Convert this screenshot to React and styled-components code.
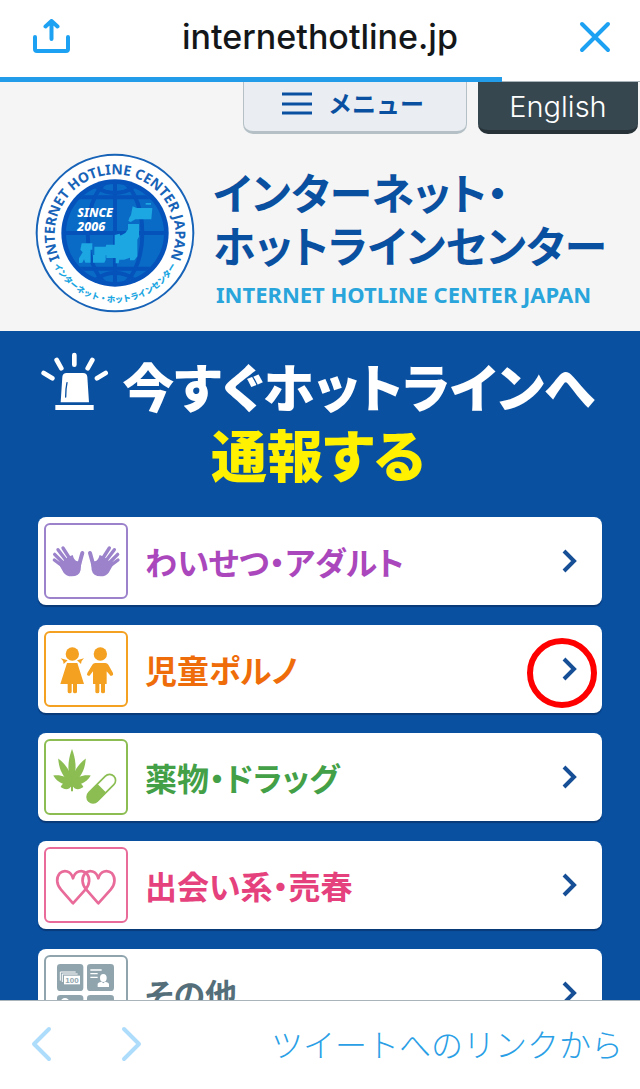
import React from 'react';
import styled, { createGlobalStyle } from 'styled-components';

const JP = '"Noto Sans CJK JP", "Noto Sans", sans-serif';
const UI = 'Inter, "Noto Sans CJK JP", sans-serif';

const GlobalStyle = createGlobalStyle`
  * { box-sizing: border-box; }
  body { margin: 0; background: white; font-family: ${JP}; }
  h1, h2, ul { margin: 0; padding: 0; }
  button { border: 0; padding: 0; background: none; font: inherit; cursor: pointer; }
  svg { display: block; }
`;

const Screen = styled.div`
  display: flex;
  flex-direction: column;
  height: 100vh;
  overflow: hidden;
`;

const BrowserBar = styled.header`
  display: grid;
  grid-template-columns: 1fr auto 1fr;
  align-items: center;
  height: 77px;
  padding: 0 28px 4px 32px;
  flex: none;
`;

const Address = styled.div`
  padding-right: 4px;
  font-family: ${UI};
  font-size: 34px;
  font-weight: 500;
  color: #14171a;
`;

const IconButton = styled.button`
  justify-self: ${props => props.$side};
  color: #1da1f2;
`;

const Progress = styled.div`
  flex: none;
  height: 5px;
  border-bottom: 1px solid #a9b4ba;
  div {
    height: 5px;
    background: #229ce9;
  }
`;

const WebView = styled.main`
  flex: 1;
  min-height: 0;
  overflow: hidden;
  background: #0a50a1;
`;

const SiteHeader = styled.div`
  background: #f5f5f5;
  padding-bottom: 18px;
`;

const Tabs = styled.nav`
  display: flex;
  justify-content: flex-end;
  gap: 11px;
  padding-right: 2px;
`;

const MenuTab = styled.button`
  display: flex;
  align-items: flex-start;
  justify-content: center;
  gap: 16px;
  width: 224px;
  height: 52px;
  padding: 4px 4px 0 0;
  border: 1px solid #b4c0c6;
  border-width: 0 1px 3px;
  border-radius: 0 0 10px 10px;
  background: #eaeef2;
  color: #0a50a1;
  font-size: 24px;
  line-height: 34px;
  font-weight: 700;
  svg { margin-top: 6px; }
`;

const LanguageTab = styled.a`
  width: 160px;
  height: 52px;
  border-bottom: 4px solid #263238;
  border-radius: 0 0 10px 10px;
  background: #37474f;
  color: white;
  font-family: ${UI};
  font-size: 29px;
  font-weight: 300;
  line-height: 50px;
  text-align: center;
  text-decoration: none;
`;

const Brand = styled.div`
  display: flex;
  gap: 18px;
  padding: 19px 30px 0 35px;
  svg { flex: none; }
`;

const SiteName = styled.h1`
  padding-top: 12px;
  color: #0a50a1;
  font-size: 43px;
  line-height: 53px;
  font-weight: 700;
  font-feature-settings: "palt";
  white-space: nowrap;
  small {
    display: block;
    padding: 4px 0 0 3px;
    color: #29a5dc;
    font-family: "Noto Sans", sans-serif;
    font-size: 22px;
    line-height: 38px;
  }
`;

const Headline = styled.h2`
  display: flex;
  justify-content: center;
  flex-wrap: wrap;
  column-gap: 13px;
  padding: 21px 42px 31px 38px;
  color: white;
  font-size: 52px;
  line-height: 67px;
  font-weight: 900;
  font-feature-settings: "palt";
  white-space: nowrap;
  em {
    flex-basis: 100%;
    text-align: center;
    color: #fff100;
    font-size: 56px;
    font-style: normal;
  }
`;

const Categories = styled.ul`
  display: flex;
  flex-direction: column;
  gap: 20px;
  padding: 0 38px;
  list-style: none;
`;

const CategoryItem = styled.li`
  position: relative;
`;

const CategoryLink = styled.a`
  display: flex;
  align-items: center;
  height: 88px;
  padding: 0 24px 0 6px;
  border-radius: 8px;
  background: white;
  box-shadow: 0 2px 1px #083a78;
  color: ${props => props.$color};
  font-size: 32px;
  font-weight: 700;
  font-feature-settings: "palt";
  text-decoration: none;
`;

const Thumb = styled.span`
  width: 84px;
  height: 76px;
  margin-right: 17px;
  border: 2px solid ${props => props.$color};
  border-radius: 6px;
  color: ${props => props.$color};
`;

const Label = styled.span`
  flex: 1;
`;

const Marker = styled.span`
  position: absolute;
  top: 13px;
  right: 5px;
  width: 70px;
  height: 70px;
  border: 6px solid #ff0000;
  border-radius: 50%;
  pointer-events: none;
`;

const BottomBar = styled.footer`
  display: flex;
  align-items: center;
  flex: none;
  height: 89px;
  padding: 0 17px 2px 30px;
  border-top: 1px solid #a9b4ba;
  gap: 66px;
`;

const NavButton = styled.button`
  color: #aedcfb;
`;

const SourceLink = styled.a`
  margin-left: auto;
  color: #2b9fe6;
  font-size: 32px;
  line-height: 40px;
  padding-bottom: 2px;
  font-weight: 300;
  text-decoration: none;
`;

const ShareIcon = () => (
  <svg width="39" height="36" viewBox="0 0 39 36" fill="none" stroke="currentColor" strokeWidth="4" strokeLinecap="round" strokeLinejoin="round">
    <path d="M3 18v12q0 2 2 2h29q2 0 2-2V18M19.500 20V2.500M13.500 7.500l6-5.500 6 5.500" />
  </svg>
);

const CloseIcon = () => (
  <svg width="34" height="34" viewBox="0 0 34 34" fill="none" stroke="currentColor" strokeWidth="4" strokeLinecap="round">
    <path d="M4 4l26 26M30 4L4 30" />
  </svg>
);

const MenuIcon = () => (
  <svg width="30" height="24" viewBox="0 0 30 24" stroke="currentColor" strokeWidth="3">
    <path d="M0 2h30M0 12h30M0 21h30" />
  </svg>
);

const Chevron = () => (
  <svg width="16" height="24" viewBox="0 0 16 24" fill="none" stroke="#174f96" strokeWidth="4">
    <path d="M2 2l10 10-10 10" />
  </svg>
);

const NavChevron = ({ forward }) => (
  <svg width="24" height="36" viewBox="0 0 24 36" fill="none" stroke="currentColor" strokeWidth="4" strokeLinecap="round" strokeLinejoin="round">
    <path d={forward ? 'M4 3l15 15L4 33' : 'M19 3L4 18l15 15'} />
  </svg>
);

const Seal = () => (
  <svg width="160" height="160" viewBox="30 24 480 480">
    <defs>
      <path id="arcTop" d="M103 339A181 181 0 1 1 437 339" />
      <path id="arcBottom" d="M83 355A208 208 0 0 0 457 355" />
      <clipPath id="globe"><circle cx="270" cy="264" r="147" /></clipPath>
    </defs>
    <circle cx="270" cy="264" r="235" fill="white" stroke="#1763b8" strokeWidth="6" />
    <circle cx="270" cy="264" r="161" fill="#0552bb" />
    <circle cx="270" cy="264" r="147" fill="#0a6bc6" />
    <g clipPath="url(#globe)" fill="none" stroke="#0552bb" strokeWidth="12">
      <path d="M110 264h320M270 100v330M120 157h300M120 371h300" />
      <ellipse cx="270" cy="264" rx="82" ry="160" />
      <ellipse cx="270" cy="90" rx="74" ry="54" />
      <ellipse cx="270" cy="438" rx="74" ry="54" />
    </g>
    <g fill="#1ca6e2">
      <path d="M323 184l12 5h47l-3 34h-48l-14 8-7-3 3-10 5-8zM362 174h16v5h-16z" />
      <path d="M309 237h33v38l-5 9v50l-9 12h-13v-8l-18 6h-14l-2 11h-9v-16h-28v-8h-36v-26h34l2-6h25v-29l15-4 2 6 15-8 8-11z" />
      <path d="M204 330h38v15l-4 8h-34zM170 295h32v19h-5v39h-16l-4-10-5 10-10 1v-14l11-18-7-8z" />
    </g>
    <g fill="white" fontFamily="'Noto Sans'" fontWeight="800" fontStyle="italic" fontSize="37">
      <text x="157" y="216">SINCE</text>
      <text x="157" y="258">2006</text>
    </g>
    <text fill="#1763b8" fontFamily="'Noto Sans'" fontWeight="700" fontSize="42" textAnchor="middle">
      <textPath href="#arcTop" startOffset="50%">INTERNET HOTLINE CENTER JAPAN</textPath>
    </text>
    <text fill="#1ca6e2" fontFamily="'Noto Sans CJK JP'" fontWeight="900" fontSize="25" textAnchor="middle">
      <textPath href="#arcBottom" startOffset="50%">インターネット・ホットラインセンター</textPath>
    </text>
  </svg>
);

const SirenIcon = () => (
  <svg width="68" height="59" viewBox="62 39 204 177" fill="white">
    <path d="M121 190l5-76q1-12 13-12h49q12 0 13 12l5 76zM105 198h115v15H105z" />
    <path d="M140 131q-4 18-4 43" fill="none" stroke="#0a50a1" strokeWidth="4" strokeLinecap="round" />
    <g stroke="white" strokeWidth="14" strokeLinecap="round">
      <path d="M162 48v29M109 63l14 25M216 63l-14 25M70 102l26 16M256 102l-26 16" />
    </g>
  </svg>
);

const Hand = () => (
  <g stroke="currentColor" strokeLinecap="round" strokeWidth="10">
    <path d="M104 188l-31-23M106 180l-32-32M114 173L84 134M124 168l-25-39" />
    <path d="M146 184l11-40" strokeWidth="12" />
    <path d="M90 184l10-16 14-12 14-6q5 18 14 19l12 0-2 26q-4 19-27 19-16 0-24-11z" stroke="none" />
  </g>
);

const HandsIcon = () => (
  <svg width="80" height="72" viewBox="48 60 240 216" fill="currentColor">
    <Hand />
    <g transform="translate(337 0) scale(-1 1)"><Hand /></g>
  </svg>
);

const ChildrenIcon = () => (
  <svg width="80" height="72" viewBox="48 384 240 216" fill="currentColor">
    <circle cx="127" cy="447" r="20" />
    <path d="M113 466l-21-6q9 7 9 17zM141 466l21-6q-9 7-9 17z" />
    <path d="M111 474h31l20 63h-21v23q0 5-6 5t-6-5v-23h-4v23q0 5-6 5t-6-5v-23H91z" />
    <circle cx="211" cy="447" r="20" />
    <path d="M196 474h30q6 0 9 5l14 25q2 6-3 8t-7-3l-9-10v38h-5v23q0 5-6 5t-6-5v-23h-5v23q0 5-6 5t-6-5v-23h-7v-38l-8 10q-3 5-7 3-5-2-2-8l15-25q3-5 9-5z" />
  </svg>
);

// rotation and length of each leaflet
const leaflets = [[0, 106], [-28, 88], [28, 88], [-65, 62], [65, 62], [-103, 35], [103, 35]];

const LeafIcon = () => (
  <svg width="80" height="72" viewBox="48 48 240 216" fill="currentColor">
    {leaflets.map(([angle, length]) => (
      <path
        key={angle}
        d={`M0 2C-18 ${-length * 0.4} -10 ${-length * 0.75} 0 ${-length}C10 ${-length * 0.75} 18 ${-length * 0.4} 0 2z`}
        transform={`translate(126 178) rotate(${angle})`}
      />
    ))}
    <path d="M123 175h6v24h-6z" />
    <g transform="rotate(45 214 191)">
      <rect x="196" y="138" width="36" height="106" rx="18" fill="white" stroke="currentColor" strokeWidth="5" />
      <path d="M196 189h36v37a18 18 0 0 1-36 0z" />
    </g>
  </svg>
);

const HeartsIcon = () => (
  <svg width="80" height="72" viewBox="48 372 240 216" fill="none" stroke="currentColor" strokeWidth="8" strokeLinejoin="round">
    <path d="M129 535L93 494C79 478 78 458 89 445C102 433 123 437 129 460C135 437 156 433 170 445C181 458 180 478 166 494z" />
    <path d="M205 535L169 494C155 478 154 458 165 445C178 433 199 437 205 460C211 437 232 433 246 445C257 458 256 478 242 494z" />
  </svg>
);

const OthersIcon = () => (
  <svg width="80" height="72" viewBox="48 66 240 216" fill="currentColor">
    <rect x="81" y="87" width="79" height="81" rx="10" />
    <rect x="171" y="87" width="81" height="81" rx="10" />
    <rect x="81" y="180" width="79" height="81" rx="10" />
    <rect x="171" y="180" width="81" height="81" rx="10" />
    <g fill="none" stroke="white" strokeWidth="3">
      <path d="M91 137v-26h46M97 141v-24h46" />
    </g>
    <path d="M102 122h48v26h-48z" fill="white" />
    <text x="126" y="143" fontFamily="'Liberation Sans'" fontWeight="700" fontSize="24" textAnchor="middle">100</text>
    <path d="M181 105h34M181 116h22M181 127h22" stroke="white" strokeWidth="4" />
    <g fill="white">
      <ellipse cx="220" cy="129" rx="10" ry="12" />
      <path d="M203 156v-8q0-6 12-8l5 5 5-5q12 2 12 8v8z" />
      <circle cx="105" cy="202" r="13" />
    </g>
  </svg>
);

const categories = [
  { name: 'わいせつ・アダルト', color: '#ab47bc', line: '#9b82cb', Icon: HandsIcon },
  { name: '児童ポルノ', color: '#ef6c0a', line: '#f4a020', Icon: ChildrenIcon, marked: true },
  { name: '薬物・ドラッグ', color: '#43a047', line: '#8bbd52', Icon: LeafIcon },
  { name: '出会い系・売春', color: '#e5417d', line: '#e86b99', Icon: HeartsIcon },
  { name: 'その他', color: '#546e7a', line: '#90a4ae', Icon: OthersIcon },
];

const Category = ({ name, color, line, Icon, marked }) => (
  <CategoryItem>
    <CategoryLink href="#" $color={color}>
      <Thumb $color={line}><Icon /></Thumb>
      <Label>{name}</Label>
      <Chevron />
    </CategoryLink>
    {marked && <Marker />}
  </CategoryItem>
);

const App = ({ loaded = 78.4 }) => (
  <Screen>
    <GlobalStyle />
    <BrowserBar>
      <IconButton $side="start" aria-label="共有"><ShareIcon /></IconButton>
      <Address>internethotline.jp</Address>
      <IconButton $side="end" aria-label="閉じる"><CloseIcon /></IconButton>
    </BrowserBar>
    <Progress><div style={{ width: `${loaded}%` }} /></Progress>
    <WebView>
      <SiteHeader>
        <Tabs>
          <MenuTab><MenuIcon />メニュー</MenuTab>
          <LanguageTab href="#">English</LanguageTab>
        </Tabs>
        <Brand>
          <Seal />
          <SiteName>
            インターネット・<br />ホットラインセンター
            <small>INTERNET HOTLINE CENTER JAPAN</small>
          </SiteName>
        </Brand>
      </SiteHeader>
      <Headline>
        <SirenIcon />
        <span>今すぐホットラインへ</span>
        <em>通報する</em>
      </Headline>
      <Categories>
        {categories.map(category => <Category key={category.name} {...category} />)}
      </Categories>
    </WebView>
    <BottomBar>
      <NavButton aria-label="戻る"><NavChevron /></NavButton>
      <NavButton aria-label="進む"><NavChevron forward /></NavButton>
      <SourceLink href="#">ツイートへのリンクから</SourceLink>
    </BottomBar>
  </Screen>
);

export default App;
